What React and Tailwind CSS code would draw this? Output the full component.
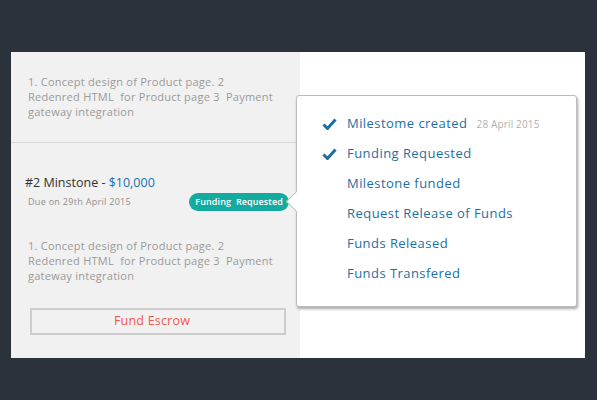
import React from 'react';

const desc = 'text-[11px] leading-[15px] tracking-[0.25px] text-[#9a9a9a]';

const steps = [
  { label: 'Milestome created', done: true, date: '28 April 2015' },
  { label: 'Funding Requested', done: true },
  { label: 'Milestone funded' },
  { label: 'Request Release of Funds' },
  { label: 'Funds Released' },
  { label: 'Funds Transfered' },
];

const Check = () => (
  <svg width="15" height="12" viewBox="0 0 15 12" className="shrink-0">
    <path d="M1.5 6.5 L5.5 10.5 L13.5 1.5" fill="none" stroke="#1c6fa4" strokeWidth="3" strokeLinejoin="miter" />
  </svg>
);

export default function App() {
  return (
    <div className="w-[597px] h-[400px] bg-[#2b323b] pt-[52px] pl-[11px]" style={{ fontFamily: '"Open Sans", "Liberation Sans", sans-serif' }}>
      <div className="relative flex w-[574px] h-[306px] bg-white">
        {/* Left column */}
        <div className="w-[289px] bg-[#f1f1f1] flex flex-col">
          <div className="h-[91px] border-b border-[#d8d8d8] pl-[17px] pr-4 pt-[22px]">
            <p className={desc}>
              1. Concept design of Product page. 2<br />
              Redenred HTML&nbsp; for Product page 3&nbsp; Payment<br />
              gateway integration
            </p>
          </div>
          <div className="pl-[14px] pr-3 pt-[31px]">
            <div className="text-[12.5px] leading-[18px] text-[#333]">
              #2 Minstone - <span className="text-[#2070ad]">$10,000</span>
            </div>
            <div className="flex items-center justify-between mt-[1px]">
              <span className="pl-[3px] text-[9px] tracking-[0.3px] text-[#8f8f8f]">Due on 29th April 2015</span>
              <span className="bg-[#13aba0] text-white text-[9px] tracking-[0.1px] font-semibold rounded-full px-[6px] h-[18px] leading-[18px] -mr-[1px]">
                Funding&nbsp; Requested
              </span>
            </div>
            <p className={`${desc} mt-[27px] pl-[3px]`}>
              1. Concept design of Product page. 2<br />
              Redenred HTML&nbsp; for Product page 3&nbsp; Payment<br />
              gateway integration
            </p>
            <button className="mt-[25px] ml-[5px] w-[256px] h-[27px] border-2 border-[#cdcdcd] text-[#f0584f] text-[12.5px] tracking-[0.2px] pr-[12px]">
              Fund Escrow
            </button>
          </div>
        </div>
        <div className="flex-1" />

        {/* Status popover */}
        <div className="absolute left-[285px] top-[43px] w-[281px] h-[212px] bg-white border border-[#bdbdbd] rounded-[3px] shadow-[1px_2px_3px_rgba(0,0,0,0.35)] pt-[13px] pl-[25px]">
          <div className="absolute -left-[8px] top-[98px] w-[15px] h-[15px] bg-white border-l border-b border-[#bdbdbd] rotate-45" />
          <ul className="flex flex-col">
            {steps.map((s) => (
              <li key={s.label} className="flex items-center h-[30px]">
                <span className="w-[25px] flex">{s.done && <Check />}</span>
                <span className="text-[13px] tracking-[0.45px] text-[#1c6fa4]">{s.label}</span>
                {s.date && <span className="ml-[9px] text-[10px] tracking-[0.15px] text-[#b0b0b0]">{s.date}</span>}
              </li>
            ))}
          </ul>
        </div>
      </div>
    </div>
  );
}
